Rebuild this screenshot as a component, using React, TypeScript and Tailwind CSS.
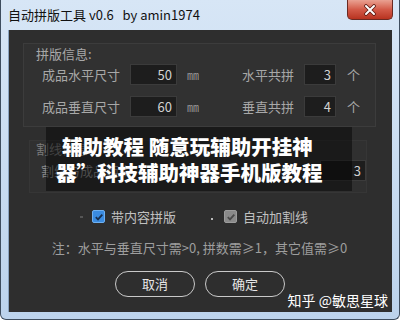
import React from "react";

const cjk = { fontFamily: '"Noto Sans CJK SC", "Noto Sans", sans-serif' };

function Input({ value, w }: { value: string; w: string }) {
  return (
    <div
      className={`${w} h-[21px] bg-[#1d1d1d] border border-[#3b3b3b] flex items-center justify-end pr-[4px] text-[13px] leading-none text-[#d2d2d2]`}
    >
      {value}
    </div>
  );
}

function Row({
  left,
  v1,
  right,
  v2,
  cls,
}: {
  left: string;
  v1: string;
  right: string;
  v2: string;
  cls: string;
}) {
  return (
    <div className={`${cls} flex items-center h-[21px] pl-[6px] text-[13px] text-[#a8a8a8]`}>
      <div className="w-[88px]">{left}</div>
      <Input value={v1} w="w-[47px]" />
      <div className="ml-[10px] w-[14px] text-[12px] text-[#9a9a9a]">㎜</div>
      <div className="ml-[41px] w-[52px]">{right}</div>
      <div className="ml-[10px]">
        <Input value={v2} w="w-[32px]" />
      </div>
      <div className="ml-[11px] text-[#a8a8a8]">个</div>
    </div>
  );
}

function Check({ on, blue }: { on: boolean; blue: boolean }) {
  return (
    <div
      className={`w-[13px] h-[13px] rounded-[2px] flex items-center justify-center ${
        blue ? "bg-[#3a8be0] border border-[#6fb0f0]" : "bg-[#8a8a8a] border border-[#9c9c9c]"
      }`}
    >
      {on && (
        <svg width="10" height="10" viewBox="0 0 10 10">
          <path
            d="M1.8 5.2 L4 7.4 L8.3 2.6"
            fill="none"
            stroke={blue ? "#18304f" : "#4a4a4a"}
            strokeWidth="1.8"
          />
        </svg>
      )}
    </div>
  );
}

export default function App() {
  return (
    <div className="w-[400px] h-[320px] overflow-hidden bg-white" style={cjk}>
      <div className="w-[400px] h-[320px] flex flex-col bg-gradient-to-b from-[#d7e6f6] to-[#bcd3ec] border-x border-b border-[#3e4d5e] rounded-b-[6px]">
        {/* Title bar */}
        <div className="h-[30px] flex items-start justify-between shrink-0">
          <div className="h-[30px] flex items-center pl-[7px] text-[13px] text-[#111] whitespace-pre">
            自动拼版工具 v0.6{"   "}by amin1974
          </div>
          <div className="mr-[6px] w-[46px] h-[20px] rounded-b-[5px] border border-t-0 border-[#6a2a22] bg-gradient-to-b from-[#e9a192] via-[#d35a48] to-[#b8321f] flex items-center justify-center">
            <svg width="14" height="12" viewBox="0 0 14 12">
              <path d="M3 2 L11 10 M11 2 L3 10" stroke="#5a1a12" strokeWidth="3.6" strokeLinecap="round" />
              <path d="M3 2 L11 10 M11 2 L3 10" stroke="#ffffff" strokeWidth="2" strokeLinecap="round" />
            </svg>
          </div>
        </div>

        {/* Content */}
        <div className="relative flex-1 mx-[7px] mb-[7px] bg-[#2e2e2e] border-l border-[#8aa3bf] flex flex-col pt-[13px] pl-[14px] pr-[16px]">
          {/* Group 1 */}
          <div className="h-[84px] border border-[#3c3c3c] bg-[#313131] pl-[12px] pt-[1px] shrink-0">
            <div className="h-[18px] leading-[18px] text-[13px] text-[#a8a8a8]">拼版信息:</div>
            <Row cls="mt-[1px]" left="成品水平尺寸" v1="50" right="水平共拼" v2="3" />
            <Row cls="mt-[11px]" left="成品垂直尺寸" v1="60" right="垂直共拼" v2="4" />
          </div>

          {/* Group 2 (mostly hidden) */}
          <div className="mt-[13px] ml-[6px] mr-[9px] h-[53px] border border-[#363636] bg-[#303030] pl-[6px] shrink-0">
            <div className="h-[16px] leading-[16px] text-[13px] text-[#7a7a7a]">割线信息:</div>
            <div className="mt-[3px] flex items-center h-[21px] pl-[5px] text-[13px] text-[#8a8a8a]">
              <div className="flex-1">割线与成品距离</div>
              <Input value="3" w="w-[46px]" />
            </div>
          </div>

          {/* Checkboxes */}
          <div className="mt-[17px] h-[13px] flex items-center text-[13px] text-[#b0b0b0] shrink-0">
            <div className="ml-[57px] w-[3px] h-[2px] bg-[#555]" />
            <div className="ml-[9px]">
              <Check on blue />
            </div>
            <div className="ml-[6px] leading-none text-[#c0c0c0]">带内容拼版</div>
            <div className="ml-[35px] w-[2px] h-[2px] bg-[#bbb] mt-[5px]" />
            <div className="ml-[11px]">
              <Check on blue={false} />
            </div>
            <div className="ml-[6px] leading-none text-[#c0c0c0]">自动加割线</div>
          </div>

          {/* Note */}
          <div className="mt-[18px] h-[14px] leading-[14px] text-[13px] text-[#9e9e9e] text-center whitespace-pre shrink-0">
            注：水平与垂直尺寸需&gt;0, 拼数需≥1，其它值需≥0
          </div>

          {/* Buttons */}
          <div className="mt-[16px] flex justify-center gap-[10px] shrink-0 -ml-[15px] -mr-[16px]">
            <div className="w-[80px] h-[26px] rounded-full border-[1.5px] border-[#c9c9c9] flex items-center justify-center text-[13px] text-[#e6e6e6]">
              取消
            </div>
            <div className="w-[80px] h-[26px] rounded-full border-[1.5px] border-[#c9c9c9] flex items-center justify-center text-[13px] text-[#e6e6e6]">
              确定
            </div>
          </div>

          {/* Overlay ad text */}
          <div className="absolute left-[37px] top-[97px] w-[306px] h-[64px] bg-[rgba(0,0,0,0.45)] text-white font-black text-[20.5px] leading-[26px] pt-[6px]">
            <div className="pl-[16px] whitespace-nowrap">辅助教程 随意玩辅助开挂神</div>
            <div className="pl-[10px] whitespace-nowrap">器”科技辅助神器手机版教程</div>
          </div>

          {/* Watermark */}
          <div className="absolute right-[4px] top-[261px] text-[14px] leading-[18px] text-white whitespace-nowrap">
            知乎 @敏思星球
          </div>
        </div>
      </div>
    </div>
  );
}
